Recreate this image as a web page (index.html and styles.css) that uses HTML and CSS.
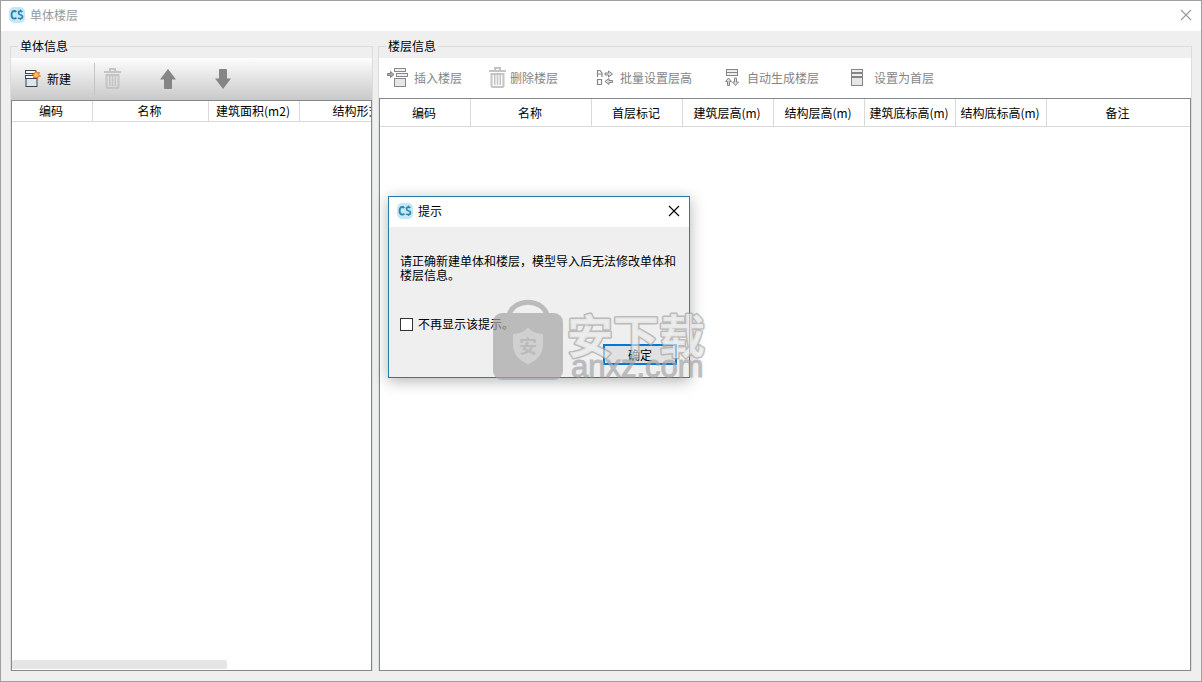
FILE: index.html
```html
<!DOCTYPE html>
<html lang="zh-CN">
<head>
<meta charset="utf-8">
<title>单体楼层</title>
<link rel="stylesheet" href="styles.css">
</head>
<body>
<svg class="defs" aria-hidden="true">
  <symbol id="logo" viewBox="0 0 16 16">
    <rect width="16" height="16" rx="5" fill="#c4e8f6"/>
    <path d="M7.300 5Q6.500 4 5.200 4 2.600 4 2.600 7.800T5.200 11.600Q6.500 11.600 7.300 10.600" fill="none" stroke="#2f83b0" stroke-width="1.800"/>
    <path d="M13.300 4.900Q12.600 4.100 11.300 4.100 9.500 4.100 9.500 5.700 9.500 7.100 11.400 7.700 13.500 8.300 13.500 9.800 13.500 11.500 11.400 11.500 9.800 11.500 9.100 10.700" fill="none" stroke="#2f83b0" stroke-width="1.700"/>
    <path d="M11.400 2.500V4M11.400 11.500V13" stroke="#2f83b0"/>
  </symbol>
  <symbol id="close" viewBox="0 0 12 12">
    <path d="M1 1L11 11M11 1L1 11" fill="none" stroke="currentColor" stroke-width="1.100"/>
  </symbol>
  <symbol id="trash" viewBox="0 0 18 22">
    <path d="M0 4H17M6 3V1H11V3" fill="none" stroke="currentColor" stroke-width="2"/>
    <path d="M2.500 7H14.500V18.500Q14.500 20 13 20H4Q2.500 20 2.500 18.500Z" fill="none" stroke="currentColor" stroke-width="2"/>
    <path d="M5.700 8V18M8.500 8V18M11.300 8V18" stroke="currentColor" stroke-width="1.600"/>
  </symbol>
  <symbol id="arrow" viewBox="0 0 18 22">
    <path d="M9 1L17 11.500H13V20Q13 21 12 21H6Q5 21 5 20V11.500H1Z" fill="currentColor"/>
  </symbol>
  <symbol id="floors" viewBox="0 0 18 18">
    <rect x="1.500" y=".5" width="11" height="3" fill="#eee" stroke="currentColor"/>
    <rect x="1.500" y="4.500" width="11" height="3" fill="#eee" stroke="currentColor"/>
    <rect x="1.500" y="8.500" width="11" height="8" fill="#e6e6e6" stroke="currentColor"/>
  </symbol>
</svg>
<div class="window">
  <header class="titlebar">
    <svg class="logo"><use href="#logo"/></svg>
    <h1 class="title">单体楼层</h1>
    <button class="close" type="button" aria-label="关闭"><svg class="close-icon"><use href="#close"/></svg></button>
  </header>
  <main class="panels">
    <fieldset class="group">
      <legend class="legend">单体信息</legend>
      <div class="group-body">
        <div class="toolbar toolbar-shaded">
          <button class="tool tool-new" type="button">
            <svg class="icon-new" viewBox="0 0 16 18">
              <rect x=".5" y=".5" width="10" height="3" fill="#fff" stroke="#3c4450"/>
              <rect x=".5" y="5.500" width="12" height="3" fill="#fff" stroke="#3c4450"/>
              <rect x="1" y="8.500" width="11" height="8" fill="#dfe6ea" stroke="#3c4450"/>
              <path d="M11 .5L12 3 14.500 2.500 13.500 4.500 15.500 6 13 6.500 12.500 9 11 7 8.500 8 9 5.800 7 4.500 9.500 3.500Z" fill="#ffc05a" stroke="#d96a14" stroke-width=".9"/>
            </svg>
            <span>新建</span>
          </button>
          <div class="tool-set">
            <button class="tool faded" type="button" aria-label="删除" disabled><svg class="icon-tall"><use href="#trash"/></svg></button>
            <button class="tool mid" type="button" aria-label="上移" disabled><svg class="icon-tall"><use href="#arrow"/></svg></button>
            <button class="tool mid" type="button" aria-label="下移" disabled><svg class="icon-tall flipped"><use href="#arrow"/></svg></button>
          </div>
        </div>
        <div class="grid-box">
          <table class="grid grid-units">
            <colgroup><col class="w81"><col class="w116"><col class="w91"><col class="w116"></colgroup>
            <thead><tr><th>编码</th><th>名称</th><th>建筑面积(m2)</th><th>结构形式</th></tr></thead>
          </table>
          <div class="scroll-track"><div class="scroll-thumb"></div></div>
        </div>
      </div>
    </fieldset>
    <fieldset class="group">
      <legend class="legend">楼层信息</legend>
      <div class="group-body">
        <div class="toolbar toolbar-floors">
          <button class="tool" type="button" disabled>
            <svg class="icon-insert" viewBox="0 0 21 20">
              <path d="M.5 5.500H3.500V3.500L7 6.500 3.500 9.500V7.500H.5Z" fill="#aaa" stroke="#777" stroke-width=".9"/>
              <rect x="7.500" y=".5" width="11" height="3" fill="#eee" stroke="#888"/>
              <rect x="9.500" y="5.500" width="11" height="3" fill="#eee" stroke="#888"/>
              <rect x="7.500" y="10.500" width="11" height="8" fill="#e6e6e6" stroke="#888"/>
            </svg>
            <span>插入楼层</span>
          </button>
          <button class="tool tight" type="button" disabled><svg class="icon-tall faded"><use href="#trash"/></svg><span>删除楼层</span></button>
          <button class="tool wide" type="button" disabled>
            <svg class="icon-square" viewBox="0 0 18 18">
              <path d="M1.500 8V1.500H4L6 4V8M1.500 5H6M1.500 10.500H5.500V15.500H1.500Z" fill="none" stroke="#858585" stroke-width="1.200"/>
              <path d="M9 4H12.500V2L16.500 5 12.500 8V6H9ZM16.500 11.500H13V9.500L9 12.500 13 15.500V13.500H16.500Z" fill="#ddd" stroke="#858585"/>
            </svg>
            <span>批量设置层高</span>
          </button>
          <button class="tool wide" type="button" disabled>
            <svg class="icon-square" viewBox="0 0 18 18">
              <rect x="3.500" y=".5" width="11" height="3" fill="#eee" stroke="#858585"/>
              <rect x="3.500" y="3.500" width="11" height="3" fill="#eee" stroke="#858585"/>
              <path d="M5.500 9L8.500 12.500H6.500V16.500H4.500V12.500H2.500ZM11.500 9H13.500V13H15.500L12.500 16.500 9.500 13H11.500Z" fill="#ddd" stroke="#858585"/>
            </svg>
            <span>自动生成楼层</span>
          </button>
          <button class="tool wide" type="button" disabled><svg class="icon-square"><use href="#floors"/></svg><span>设置为首层</span></button>
        </div>
        <div class="grid-box">
          <table class="grid grid-floors">
            <colgroup><col class="w91"><col class="w121"><col class="w91"><col class="w91"><col class="w91"><col class="w91"><col class="w91"><col></colgroup>
            <thead><tr><th>编码</th><th>名称</th><th>首层标记</th><th>建筑层高(m)</th><th>结构层高(m)</th><th>建筑底标高(m)</th><th>结构底标高(m)</th><th>备注</th></tr></thead>
          </table>
        </div>
      </div>
    </fieldset>
  </main>
  <section class="dialog" role="dialog" aria-labelledby="dialog-title">
    <header class="titlebar dialog-bar">
      <svg class="logo"><use href="#logo"/></svg>
      <h2 class="title" id="dialog-title">提示</h2>
      <button class="close" type="button" aria-label="关闭"><svg class="close-icon"><use href="#close"/></svg></button>
    </header>
    <div class="dialog-body">
      <p class="message">请正确新建单体和楼层，模型导入后无法修改单体和楼层信息。</p>
      <label class="check"><input class="check-box" type="checkbox">不再显示该提示。</label>
      <button class="ok" type="button">确定</button>
    </div>
  </section>
  <svg class="watermark" viewBox="0 0 216 84" role="img" aria-label="安下载 anxz.com">
    <path d="M18 16C23 -1 51 -1 56 16" fill="none" stroke="#a6a6a6" stroke-width="5"/>
    <rect x="2" y="14" width="70" height="67" rx="9" fill="#a6a6a6"/>
    <path d="M37 29Q44 35 52 35V45Q52 59 37 65 22 59 22 45V35Q30 35 37 29Z" fill="#c4c4c4"/>
    <text class="mark-badge" x="28" y="54">安</text>
    <text class="mark-name" x="76" y="54">安下载</text>
    <text class="mark-site" x="80" y="78">anxz.com</text>
  </svg>
</div>
</body>
</html>
```

FILE: styles.css
```css
* { box-sizing: border-box; }

body {
  margin: 0;
  font: 12px/16px "Noto Sans CJK SC", sans-serif;
  color: #000;
}

button {
  font: inherit;
  padding: 0;
  border: 0;
  background: none;
}

.defs { position: absolute; width: 0; height: 0; }

.window {
  position: relative;
  display: flex;
  flex-direction: column;
  min-height: 100vh;
  background: #efefef;
  border: 1px solid #a0a0a0;
}

.titlebar {
  display: flex;
  align-items: center;
  gap: 5px;
  height: 30px;
  padding: 0 9px 2px 8px;
  background: #fff;
  color: #999;
}

.title { margin: 0; font-size: 12px; font-weight: 400; }
.logo { width: 16px; height: 16px; }
.close { display: flex; margin-left: auto; color: inherit; }
.close-icon { width: 12px; height: 12px; }

.panels {
  flex: 1;
  display: grid;
  grid-template-columns: minmax(0, 363fr) minmax(0, 814fr);
  gap: 5px;
  padding: 7px 9px 10px;
}

.group {
  display: flex;
  min-width: 0;
  margin: 0;
  padding: 4px 0 0;
  border: 1px solid #dcdcdc;
  border-bottom: 0;
}

.legend { margin-left: 7px; padding: 0 2px; }

.group-body {
  flex: 1;
  display: flex;
  flex-direction: column;
  min-width: 0;
}

.toolbar { display: flex; align-items: center; background: #fff; }

.toolbar-shaded {
  height: 42px;
  background: linear-gradient(#fdfdfd, #c9c9c9);
}

.toolbar-floors { height: 40px; gap: 27px; padding-left: 8px; color: #858585; }

.tool {
  display: flex;
  align-items: center;
  gap: 6px;
  color: inherit;
  white-space: nowrap;
}

.tool-new { padding: 0 23px 0 14px; }
.tight { gap: 3px; margin-right: 7px; }
.wide { margin-left: 4px; }

.tool-set {
  display: flex;
  gap: 37px;
  padding: 5px 8px 5px 9px;
  border-left: 1px solid #c4c4c4;
}

.faded { color: #c4c4c4; }
.mid { color: #858585; }
.flipped { transform: rotate(180deg); }
.icon-new { width: 16px; height: 18px; }
.icon-tall { width: 18px; height: 22px; }
.icon-insert { width: 21px; height: 20px; }
.icon-square { width: 18px; height: 18px; }

.grid-box {
  flex: 1;
  display: flex;
  flex-direction: column;
  overflow: hidden;
  background: #fff;
  border: 1px solid #828790;
}

.grid { table-layout: fixed; border-collapse: separate; border-spacing: 0; }
.grid-units { width: 404px; }
.grid-floors { width: 100%; }

.grid th {
  padding: 0 2px 0 0;
  font-weight: 400;
  text-align: center;
  white-space: nowrap;
  border-right: 1px solid #d9d9d9;
  border-bottom: 1px solid #d9d9d9;
}

.grid-units th { height: 21px; }
.grid-floors th { height: 28px; }
.grid-floors th:last-child { border-right: 0; }

.w81 { width: 81px; }
.w91 { width: 91px; }
.w116 { width: 116px; }
.w121 { width: 121px; }

.scroll-track { margin-top: auto; padding-bottom: 1px; }
.scroll-thumb { width: 60%; height: 9px; border-radius: 2px; background: #e5e5e5; }

.dialog {
  position: absolute;
  left: 387px;
  top: 195px;
  width: 302px;
  background: #efefef;
  border: 1px solid #2b7ba8;
  box-shadow: 0 3px 14px rgba(0, 0, 0, 0.3);
}

.dialog-bar { color: #000; }

.dialog-body {
  display: flex;
  flex-direction: column;
  padding: 27px 12px 12px 11px;
}

.message { margin: 0 -1px 0 0; line-height: 14px; }

.check {
  display: flex;
  align-items: center;
  gap: 5px;
  margin-top: 34px;
}

.check-box {
  appearance: none;
  width: 13px;
  height: 13px;
  margin: 0;
  background: #fff;
  border: 1px solid #333;
}

.ok {
  align-self: flex-end;
  width: 74px;
  height: 21px;
  margin-top: 12px;
  background: #e1e1e1;
  border: 2px solid #0078d7;
}

.watermark {
  position: absolute;
  left: 490px;
  top: 298px;
  width: 216px;
  height: 84px;
  opacity: 0.7;
  pointer-events: none;
}

.mark-badge { font-size: 18px; font-weight: 700; fill: #a6a6a6; }

.mark-name {
  font-size: 46px;
  font-weight: 700;
  fill: #ededed;
  fill-opacity: 0.9;
  stroke: #a6a6a6;
  stroke-width: 3px;
  stroke-linejoin: round;
  paint-order: stroke;
}

.mark-site { font: 31px "Liberation Sans", Arial, sans-serif; fill: #a6a6a6; stroke: #a6a6a6; }
```
